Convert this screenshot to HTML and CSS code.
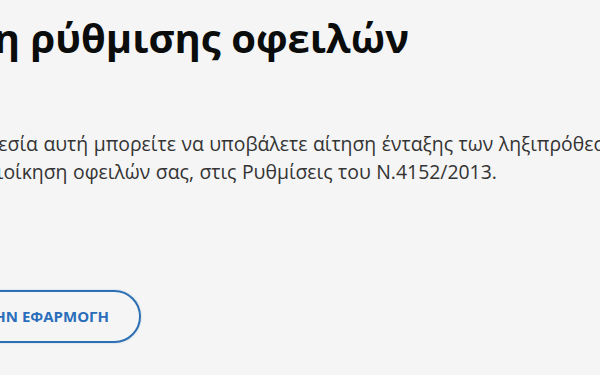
FILE: index.html
```html
<!DOCTYPE html>
<html lang="el">
<head>
    <meta charset="UTF-8">
    <meta name="viewport" content="width=device-width, initial-scale=1.0">
    <title>Αίτηση ρύθμισης οφειλών</title>
    <link rel="stylesheet" href="styles.css">
</head>
<body>

<div class="page">
    <h1 class="title">Αίτηση ρύθμισης οφειλών</h1>
    <p class="lead">
        Με την υπηρεσία αυτή μπορείτε να υποβάλετε αίτηση ένταξης των ληξιπρόθεσμων, προς τη<br>
        Φορολογική Διοίκηση οφειλών σας, στις Ρυθμίσεις του Ν.4152/2013.
    </p>
    <a class="btn-start" href="#">Είσοδος στην εφαρμογή</a>
</div>

</body>
</html>
```

FILE: styles.css
```css
html, body {
    margin: 0;
    height: 100%;
    overflow: hidden;
}
body {
    font-family: "Open Sans", "Noto Sans", sans-serif;
    background-color: #f5f5f5;
    color: #1b1b1b;
}
.page {
    margin-left: -124px;
    width: 1200px;
    padding-top: 14px;
}
.title {
    margin: 0;
    font-size: 40px;
    line-height: 48px;
    font-weight: 700;
    color: #0b0c0c;
}
.lead {
    margin: 68px 0 0 -7px;
    font-size: 19.4px;
    line-height: 28px;
    text-indent: 12px;
    word-spacing: 0.5px;
    color: #333;
}
.btn-start {
    display: inline-block;
    margin-top: 104px;
    padding: 14px 30px;
    border: 2px solid #2d6fb3;
    border-radius: 28px;
    font-size: 15px;
    line-height: 21px;
    font-weight: 700;
    text-transform: uppercase;
    text-decoration: none;
    color: #2a6ebb;
    box-shadow: 0 0 2px rgba(45, 111, 179, 0.35);
}
```
